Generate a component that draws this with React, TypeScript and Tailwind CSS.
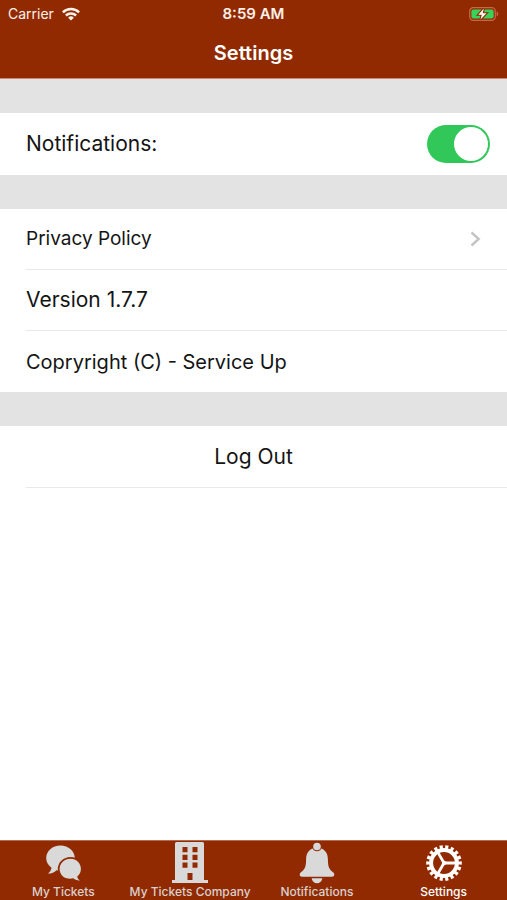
import React, { useState } from "react";

function WifiIcon() {
  return (
    <svg width="18" height="14" viewBox="0 0 18 14" fill="none" stroke="#fdf1ea" strokeWidth="2.5" aria-hidden="true">
      <path d="M0.9 5.3a11.6 11.6 0 0 1 16.2 0" />
      <path d="M3.9 8.5a7.3 7.3 0 0 1 10.2 0" />
      <path d="M9 13.6 6.1 10.7a4.1 4.1 0 0 1 5.8 0z" fill="#fdf1ea" stroke="none" />
    </svg>
  );
}

function BatteryIcon() {
  return (
    <svg width="30" height="14" viewBox="0 0 30 14" aria-hidden="true">
      <rect x="0.7" y="0.7" width="25.6" height="12.6" rx="3.6" fill="none" stroke="#c8674a" strokeWidth="1.2" />
      <path d="M27.6 4.6c2.2.6 2.2 4.2 0 4.8z" fill="#c8674a" />
      <rect x="2.4" y="2.4" width="22.2" height="9.2" rx="2" fill="#37d35b" />
      <path d="M14.8 1.5 9.3 7.7h3.5l-1.3 4.8 6-6.2h-3.8z" fill="#fff" stroke="#922a01" strokeWidth="2.2" paintOrder="stroke" />
    </svg>
  );
}

function ChatIcon() {
  return (
    <svg width="36" height="40" viewBox="0 0 36 40" fill="#d9d9d9" aria-hidden="true">
      <path d="M15.5 2.4C7.5 2.4 1.2 7.9 1.2 15c0 4 2.1 7.500 5.300 9.700-.3 2.100-1.500 4.300-3.500 5.900 3.300.1 6.300-1 8.500-3.400 1.300.3 2.600.4 4 .4 8 0 14.300-5.700 14.300-12.600S23.500 2.400 15.500 2.400z" />
      <path
        d="M25.500 15.700c6.100 0 10.400 4.500 10.400 10.200 0 3.100-1.400 5.700-3.700 7.500.3 1.600 1.200 3 2.700 4-2.500.2-4.900-.6-6.600-2.100-1 .3-2.100.4-3.300.4-6.100 0-10.400-4.300-10.400-9.800s4.800-10.200 10.900-10.200z"
        stroke="#922a01"
        strokeWidth="3.6"
        paintOrder="stroke"
      />
    </svg>
  );
}

function BuildingIcon() {
  return (
    <svg width="36" height="42" viewBox="0 0 36 42" fill="#d9d9d9" fillRule="evenodd" aria-hidden="true">
      <path d="M4.500 0h26a1.500 1.500 0 0 1 1.500 1.500V38h4v3H0v-3h3V1.500A1.500 1.500 0 0 1 4.500 0zM10.500 5v5.200h5V5zM20.500 5v5.200h5V5zM10.500 12.800V18h5v-5.200zM20.500 12.800V18h5v-5.200zM10.500 20.600v5.200h5v-5.200zM20.500 20.600v5.200h5v-5.200zM15.500 31v7h5v-7z" />
    </svg>
  );
}

function BellIcon() {
  return (
    <svg width="36" height="42" viewBox="0 0 36 42" fill="#d9d9d9" aria-hidden="true">
      <path d="M18 5.800c-6.800 0-10.900 4.700-10.900 11.500 0 8-1.600 10.300-5.100 13-1.900 1.500-1.700 4.500 1 4.500h30c2.700 0 2.900-3 1-4.500-3.500-2.700-5.100-5-5.100-13C28.900 10.500 24.800 5.800 18 5.800z" />
      <circle cx="18" cy="4.500" r="3.800" stroke="#922a01" strokeWidth="2" paintOrder="stroke" />
      <path d="M12.600 36.300h10.800c-.7 3.300-2.800 5-5.400 5s-4.700-1.700-5.400-5z" />
    </svg>
  );
}

function GearIcon() {
  return (
    <svg width="36" height="36" viewBox="0 0 36 36" fill="none" stroke="#fff" aria-hidden="true">
      <circle cx="18" cy="18" r="15.800" strokeWidth="4" pathLength="180" strokeDasharray="5.6 4.4" strokeDashoffset="2.800" />
      <circle cx="18" cy="18" r="12.900" strokeWidth="4" />
      <path d="M18 18h12M18 18 12 7.600M18 18l-6 10.400" strokeWidth="2.800" />
      <circle cx="18" cy="18" r="2.200" fill="#fff" stroke="none" />
    </svg>
  );
}

const tabs = [
  { name: "My Tickets", href: "#tickets", icon: <ChatIcon /> },
  { name: "My Tickets Company", href: "#company", icon: <BuildingIcon /> },
  { name: "Notifications", href: "#notifications", icon: <BellIcon /> },
  { name: "Settings", href: "#settings", icon: <GearIcon /> },
];

export default function App() {
  const [notifications, setNotifications] = useState(true);

  return (
    <div className="flex min-h-screen flex-col bg-white font-['Inter','Liberation_Sans',sans-serif] text-[#141414]">
      <header className="border-b border-[#c98a70] bg-[#922a01] text-[#fdf1ea]">
        <div className="grid h-7 grid-cols-3 items-center px-2">
          <div className="flex items-center gap-2 text-sm">
            <span>Carrier</span>
            <WifiIcon />
          </div>
          <span className="text-center text-[15px] font-semibold">8:59 AM</span>
          <div className="flex justify-end">
            <BatteryIcon />
          </div>
        </div>
        <h1 className="flex h-[50px] items-center justify-center text-xl font-semibold text-white">Settings</h1>
      </header>

      <main className="flex-1">
        <section className="border-t-[34px] border-[#e3e3e3]">
          <div className="flex h-[62px] items-center justify-between pr-[17px] pl-[26px]">
            <label htmlFor="notifications" className="text-[21px]">
              Notifications:
            </label>
            <input
              id="notifications"
              type="checkbox"
              role="switch"
              checked={notifications}
              onChange={(e) => setNotifications(e.target.checked)}
              className="flex h-[38px] w-[63px] cursor-pointer appearance-none items-center rounded-full bg-[#e3e3e3] px-[2px] before:size-[34px] before:rounded-full before:bg-white checked:justify-end checked:bg-[#32c759]"
            />
          </div>
        </section>

        <section className="border-t-[34px] border-[#e3e3e3] pl-[26px]">
          <a href="#privacy" className="flex h-[61px] items-center justify-between border-b border-[#e8e8e8] pr-[26px] text-[19px]">
            Privacy Policy
            <svg width="11" height="16" viewBox="0 0 11 16" fill="none" stroke="#c4c4c6" strokeWidth="2.4" aria-hidden="true">
              <path d="M1.500 1.500 8.700 8l-7.200 6.500" />
            </svg>
          </a>
          <p className="flex h-[61px] items-center border-b border-[#e8e8e8] text-[21px]">Version 1.7.7</p>
          <p className="flex h-[61px] items-center text-[20px]">Copryright (C) - Service Up</p>
        </section>

        <section className="border-t-[34px] border-[#e3e3e3]">
          <button type="button" className="block h-[61px] w-full text-center text-[21px]">
            Log Out
          </button>
          <hr className="ml-[26px] border-[#e8e8e8]" />
        </section>
      </main>

      <nav className="grid h-[60px] grid-cols-4 border-t border-[#b56a4d] bg-[#922a01]">
        {tabs.map((tab) => (
          <a
            key={tab.name}
            href={tab.href}
            aria-current={tab.name === "Settings" ? "page" : undefined}
            className="flex flex-col items-center text-xs font-medium whitespace-nowrap text-[#d9d0cc] aria-[current=page]:text-white"
          >
            <span className="flex h-[43px] items-center">{tab.icon}</span>
            <span>{tab.name}</span>
          </a>
        ))}
      </nav>
    </div>
  );
}
